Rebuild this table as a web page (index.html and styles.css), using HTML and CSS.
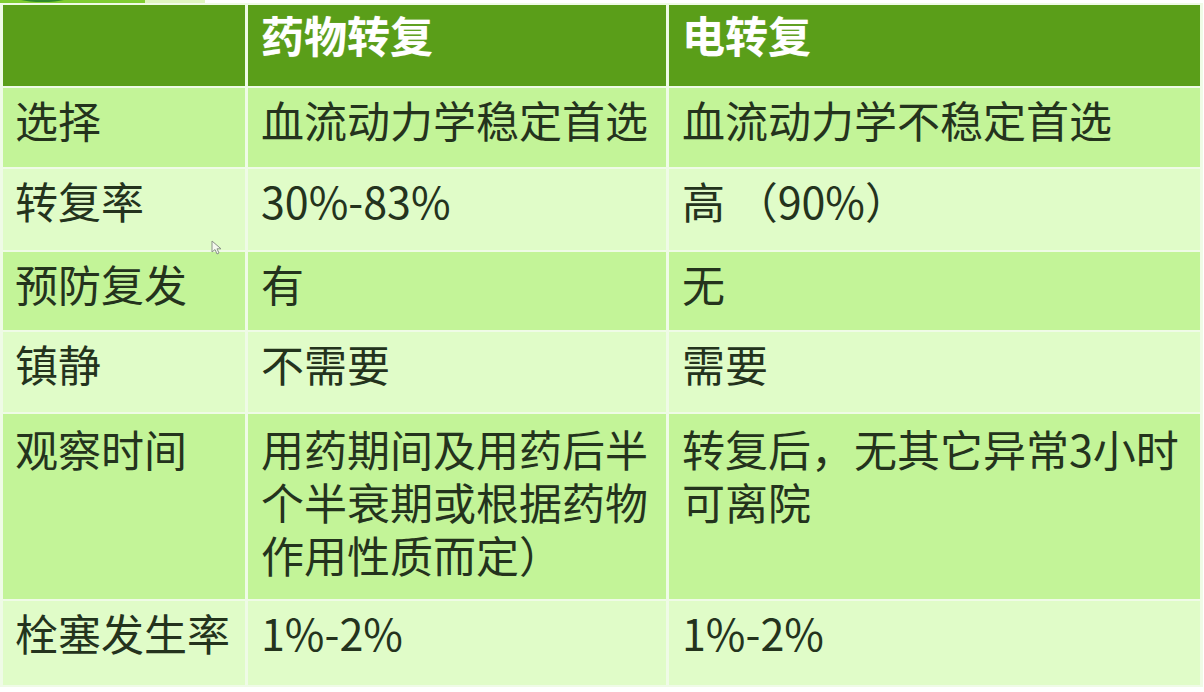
FILE: index.html
```html
<!DOCTYPE html>
<html lang="zh-CN">
<head>
<meta charset="utf-8">
<title>药物转复与电转复</title>
<link rel="stylesheet" href="styles.css">
</head>
<body>
<div class="strip"><span class="s1"><span class="arc"></span></span><span class="s2"></span><span class="s3"></span></div>
<table class="cmp">
  <colgroup><col class="c1"><col class="c2"><col class="c3"></colgroup>
  <tr class="head"><th></th><th>药物转复</th><th>电转复</th></tr>
  <tr class="odd r1"><td>选择</td><td>血流动力学稳定首选</td><td>血流动力学不稳定首选</td></tr>
  <tr class="even r2"><td>转复率</td><td>30%-83%</td><td>高 （90%）</td></tr>
  <tr class="odd r3"><td>预防复发</td><td>有</td><td>无</td></tr>
  <tr class="even r4"><td>镇静</td><td>不需要</td><td>需要</td></tr>
  <tr class="odd r5"><td>观察时间</td><td>用药期间及用药后半<br>个半衰期或根据药物<br>作用性质而定）</td><td>转复后，无其它异常3小时<br>可离院</td></tr>
  <tr class="even r6"><td>栓塞发生率</td><td>1%-2%</td><td>1%-2%</td></tr>
</table>
<svg class="cursor" width="12" height="16" viewBox="0 0 12 16"><path d="M1 1 L1 12 L4 9.5 L6 14 L8 13 L6 8.8 L10 8.8 Z" fill="#f4f8ee" stroke="#8a9488" stroke-width="1"/></svg>
</body>
</html>
```
FILE: styles.css
```css
html, body {
  margin: 0;
  padding: 0;
  background: #ffffff;
}
body {
  position: relative;
  width: 1204px;
  height: 692px;
  overflow: hidden;
  font-family: "Noto Sans CJK SC", "Noto Sans", sans-serif;
}
.strip {
  display: flex;
  height: 3px;
}
.strip .s1 {
  width: 145px;
  background: #7fcd32;
  position: relative;
  overflow: hidden;
}
.strip .arc {
  position: absolute;
  left: 10px;
  top: -14px;
  width: 65px;
  height: 16px;
  border-radius: 50%;
  background: #2f8a2a;
}
.strip .s2 {
  width: 60px;
  background: #dff5c0;
}
.strip .s3 {
  flex: 1;
  background: #ffffff;
}
.cmp {
  border-collapse: separate;
  border-spacing: 3px 2px;
  margin: 0;
  background: #effbe6;
  table-layout: fixed;
  width: 1203px;
}
.c1 { width: 242px; }
.c2 { width: 418px; }
.c3 { width: 531px; }
.cmp th, .cmp td {
  text-align: left;
  vertical-align: top;
  padding: 5px 8px 0 13px;
  font-size: 43px;
  line-height: 53px;
  white-space: nowrap;
}
.cmp th {
  background: #5a9e19;
  color: #ffffff;
  font-weight: 700;
  padding-top: 3px;
  text-shadow: 0 0 1px rgba(255,255,255,0.4);
}
.cmp td {
  color: #24331d;
  font-weight: 400;
}
.head { height: 81px; }
.r1 { height: 79px; }
.r2 { height: 81px; }
.r3 { height: 78px; }
.r4 { height: 80px; }
.r5 { height: 185px; }
.r6 { height: 84px; }
.odd td { background: #c3f498; }
.even td { background: #e0fcc8; }
.r5 td { padding-top: 8px; }
.r1 td:first-child, .r2 td:first-child, .r3 td:first-child, .r4 td:first-child, .r5 td:first-child, .r6 td:first-child {
  padding-left: 12px;
}
.cursor {
  position: absolute;
  left: 211px;
  top: 240px;
}
```
